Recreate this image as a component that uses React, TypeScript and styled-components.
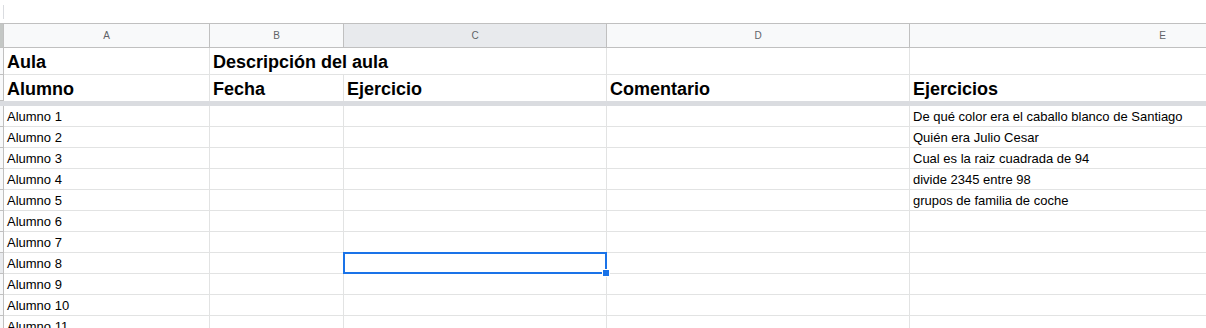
import styled, { createGlobalStyle } from "styled-components";

const GlobalStyle = createGlobalStyle`
  html, body {
    margin: 0;
    padding: 0;
    background: #fff;
    overflow: hidden;
  }
  body {
    font-family: "Liberation Sans", Arial, sans-serif;
  }
`;

const columns = [
  { key: "A", width: 206 },
  { key: "B", width: 134 },
  { key: "C", width: 263 },
  { key: "D", width: 303 },
  { key: "E", width: 506 },
];

const exercises = [
  "De qué color era el caballo blanco de Santiago",
  "Quién era Julio Cesar",
  "Cual es la raiz cuadrada de 94",
  "divide 2345 entre 98",
  "grupos de familia de coche",
];

const selectedCol = "C";
const selectedRow = 8;

const App = () => {
  const rows = Array.from({ length: 11 }, (_, i) => i + 1);

  return (
    <>
      <GlobalStyle />
      <Sheet>
        <TopBar>
          <Divider />
        </TopBar>

        <Row>
          <Corner />
          {columns.map((c) => (
            <ColHeader key={c.key} $w={c.width} $selected={c.key === selectedCol}>
              {c.key}
            </ColHeader>
          ))}
        </Row>

        <Row>
          <RowHeader />
          <Cell $w={206} $h={27} $big>Aula</Cell>
          <Cell $w={134 + 263} $h={27} $big>Descripción del aula</Cell>
          <Cell $w={303} $h={27} />
          <Cell $w={506} $h={27} />
        </Row>

        <Row>
          <RowHeader />
          <Cell $w={206} $h={27} $big $frozen>Alumno</Cell>
          <Cell $w={134} $h={27} $big $frozen>Fecha</Cell>
          <Cell $w={263} $h={27} $big $frozen>Ejercicio</Cell>
          <Cell $w={303} $h={27} $big $frozen>Comentario</Cell>
          <Cell $w={506} $h={27} $big $frozen>Ejercicios</Cell>
        </Row>
        <FreezeBar />

        {rows.map((n) => (
          <Row key={n}>
            <RowHeader $selected={n === selectedRow} />
            <Cell $w={206} $h={21}>Alumno {n}</Cell>
            <Cell $w={134} $h={21} />
            <Cell $w={263} $h={21}>
              {n === selectedRow && (
                <Selection>
                  <Handle />
                </Selection>
              )}
            </Cell>
            <Cell $w={303} $h={21} />
            <Cell $w={506} $h={21}>{exercises[n - 1] ?? ""}</Cell>
          </Row>
        ))}
      </Sheet>
    </>
  );
};

export default App;

const Sheet = styled.div`
  width: 1206px;
  height: 328px;
  overflow: hidden;
  display: flex;
  flex-direction: column;
`;

const TopBar = styled.div`
  height: 23px;
  flex: none;
  display: flex;
  align-items: flex-start;
`;

const Divider = styled.div`
  width: 1px;
  height: 14px;
  margin: 5px 0 0 3px;
  background: #dadce0;
`;

const Row = styled.div`
  display: flex;
  flex: none;
`;

const Corner = styled.div`
  width: 3px;
  height: 23px;
  flex: none;
  background: #c4c7c5;
  border-top: 1px solid #c0c0c0;
  border-bottom: 1px solid #c0c0c0;
  border-right: 1px solid #c0c0c0;
`;

const ColHeader = styled.div<{ $w: number; $selected?: boolean }>`
  width: ${({ $w }) => $w - 1}px;
  height: 23px;
  flex: none;
  display: flex;
  align-items: center;
  justify-content: center;
  border-top: 1px solid #c0c0c0;
  border-bottom: 1px solid #c0c0c0;
  border-right: 1px solid #c0c0c0;
  background: ${({ $selected }) => ($selected ? "#e8eaed" : "#f8f9fa")};
  color: #5f6368;
  font-family: "Liberation Sans", Arial, sans-serif;
  font-size: 10px;
`;

const RowHeader = styled.div<{ $selected?: boolean }>`
  width: 3px;
  flex: none;
  background: ${({ $selected }) => ($selected ? "#e8eaed" : "#f8f9fa")};
  border-right: 1px solid #c0c0c0;
  border-bottom: 1px solid #c0c0c0;
`;

/* $h is the full row height, bottom gridline included */
const Cell = styled.div<{ $w: number; $h: number; $big?: boolean; $frozen?: boolean }>`
  position: relative;
  flex: none;
  display: flex;
  align-items: flex-end;
  width: ${({ $w }) => $w - 1 - 3}px;
  height: ${({ $h }) => $h - 1}px;
  padding-left: 3px;
  border-right: 1px solid #e2e3e3;
  border-bottom: ${({ $frozen }) => ($frozen ? "none" : "1px solid #e2e3e3")};
  white-space: nowrap;
  color: #000;
  font-size: ${({ $big }) => ($big ? "18px" : "13px")};
  font-weight: ${({ $big }) => ($big ? 700 : 400)};
  line-height: ${({ $big }) => ($big ? "24px" : "18px")};
`;

const FreezeBar = styled.div`
  height: 5px;
  flex: none;
  background: #dadce0;
`;

const Selection = styled.div`
  position: absolute;
  top: -1px;
  left: -1px;
  right: -1px;
  bottom: -1px;
  border: 2px solid #1a73e8;
  pointer-events: none;
  z-index: 2;
`;

const Handle = styled.div`
  position: absolute;
  right: -5px;
  bottom: -5px;
  width: 6px;
  height: 6px;
  background: #1a73e8;
  border: 1px solid #fff;
`;
